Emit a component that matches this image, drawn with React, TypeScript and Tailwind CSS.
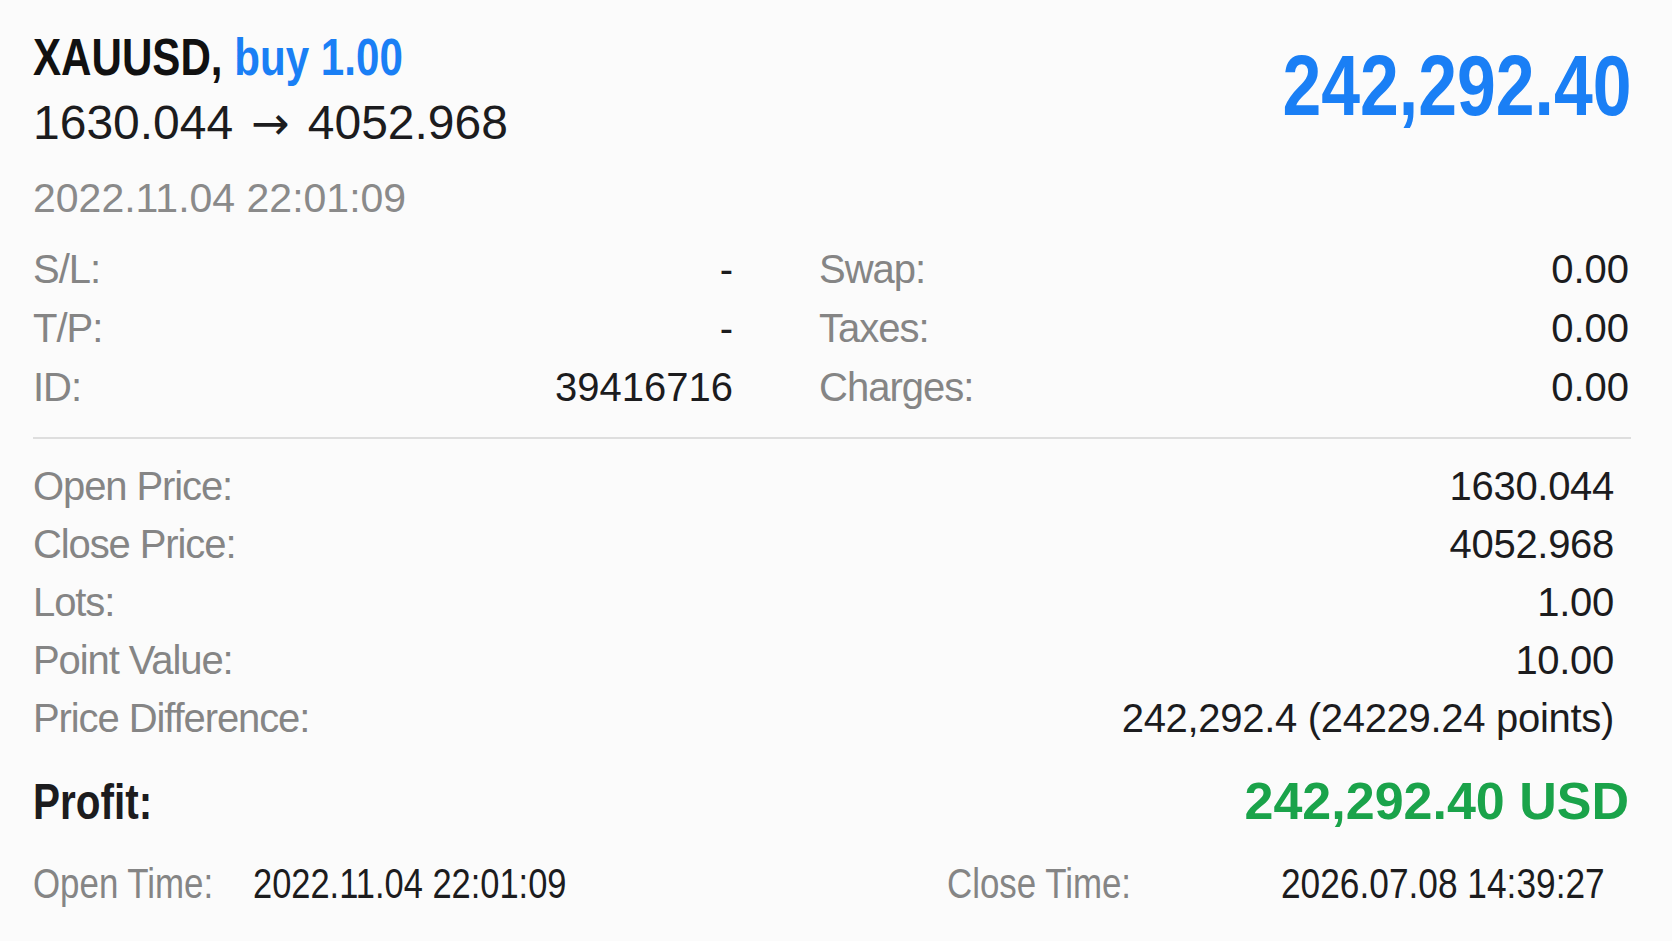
import React from "react";

type Row = { label: string; value: string };

const leftInfo: Row[] = [
  { label: "S/L:", value: "-" },
  { label: "T/P:", value: "-" },
  { label: "ID:", value: "39416716" },
];

const rightInfo: Row[] = [
  { label: "Swap:", value: "0.00" },
  { label: "Taxes:", value: "0.00" },
  { label: "Charges:", value: "0.00" },
];

const details: Row[] = [
  { label: "Open Price:", value: "1630.044" },
  { label: "Close Price:", value: "4052.968" },
  { label: "Lots:", value: "1.00" },
  { label: "Point Value:", value: "10.00" },
  { label: "Price Difference:", value: "242,292.4 (24229.24 points)" },
];

function InfoColumn({ rows }: { rows: Row[] }) {
  return (
    <div className="flex flex-col">
      {rows.map(r => (
        <div key={r.label} className="flex justify-between text-[40px] leading-[59px]">
          <span className="text-[#858585] tracking-[-1px]">{r.label}</span>
          <span className="text-[#1c1c1e]">{r.value}</span>
        </div>
      ))}
    </div>
  );
}

export default function App() {
  return (
    <div className="min-h-[941px] w-full bg-[#fbfbfb] font-['Liberation_Sans',Arial,sans-serif] pl-[33px] pr-[41px]">
      {/* header */}
      <div className="flex justify-between items-start pt-[27px]">
        <div className="flex flex-col">
          <div className="h-[60px]">
            <span className="inline-block whitespace-nowrap origin-left scale-x-81 font-bold text-[52px] leading-[60px] text-[#111111]">
              XAUUSD, <span className="text-[#1a7ff5]">buy 1.00</span>
            </span>
          </div>
          <div className="mt-[4px] text-[48px] leading-[64px] text-[#1c1c1e] whitespace-nowrap">
            1630.044<span className="mx-[18px] font-['DejaVu_Sans',sans-serif] text-[46px]">→</span>4052.968
          </div>
          <div className="mt-[13px] text-[41px] leading-[60px] text-[#8a8a8a]">
            2022.11.04 22:01:09
          </div>
        </div>
        <span className="inline-block whitespace-nowrap origin-right scale-x-82 font-bold mt-[17px] text-[85px] leading-[84px] text-[#1a7ff5]">
          242,292.40
        </span>
      </div>

      {/* sl / tp / swap */}
      <div className="mt-[12px] grid grid-cols-[700px_1fr] gap-x-[86px]">
        <InfoColumn rows={leftInfo} />
        <div className="pr-[2px]">
          <InfoColumn rows={rightInfo} />
        </div>
      </div>

      <div className="mt-[20px] h-[2px] bg-[#dedede]" />

      {/* prices */}
      <div className="mt-[18px] flex flex-col pr-[17px]">
        {details.map(r => (
          <div key={r.label} className="flex justify-between text-[40px] leading-[58px]">
            <span className="text-[#858585] tracking-[-1.1px]">{r.label}</span>
            <span className="text-[#1c1c1e] tracking-[-0.3px]">{r.value}</span>
          </div>
        ))}
      </div>

      {/* profit */}
      <div className="mt-[24px] flex justify-between items-baseline">
        <span className="inline-block whitespace-nowrap origin-left scale-x-81 font-bold text-[50px] leading-[60px] text-[#1c1c1e]">
          Profit:
        </span>
        <span className="font-bold text-[52px] leading-[60px] text-[#1aa34a] pr-[2px]">242,292.40 USD</span>
      </div>

      {/* times */}
      <div className="mt-[22px] grid grid-cols-[220px_694px_334px_1fr] text-[42px] leading-[60px] whitespace-nowrap">
        <span className="inline-block origin-left scale-x-83 text-[#858585]">Open Time:</span>
        <span className="inline-block origin-left scale-x-82 text-[#1c1c1e]">2022.11.04 22:01:09</span>
        <span className="inline-block origin-left scale-x-83 text-[#858585]">Close Time:</span>
        <span className="inline-block origin-left scale-x-84 text-[#1c1c1e]">2026.07.08 14:39:27</span>
      </div>
    </div>
  );
}
